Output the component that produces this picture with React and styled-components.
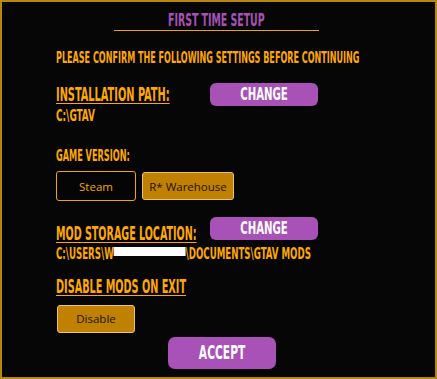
import React from 'react';
import styled, { createGlobalStyle } from 'styled-components';

const ORANGE = '#ffa800';
const PURPLE = '#a851b7';
const GOLD = '#c08000';

const Global = createGlobalStyle`
  html, body { margin: 0; padding: 0; background: #000; }
  #root { width: 437px; height: 379px; }
`;

const Frame = styled.div`
  box-sizing: border-box;
  width: 437px;
  height: 379px;
  border: 2px solid #b8860b;
  background: #060606;
  display: flex;
  flex-direction: column;
  overflow: hidden;
`;

const Header = styled.header`
  display: flex;
  flex-direction: column;
  align-items: center;
  padding: 8.7px 4px 0 0;
`;

const Caps = styled.span`
  display: inline-block;
  font-family: "Liberation Sans Narrow", "DejaVu Sans Condensed", "Liberation Sans", sans-serif;
  font-weight: 700;
  text-transform: uppercase;
  white-space: nowrap;
  font-size: ${p => p.$size}px;
  line-height: 1;
  color: ${p => p.$color || ORANGE};
  transform: scaleX(${p => p.$sx || 0.58});
  transform-origin: ${p => p.$origin || 'left'} center;
  text-decoration: ${p => (p.$underline ? 'underline' : 'none')};
  text-decoration-thickness: 1px;
  text-underline-offset: 2px;
  margin-top: ${p => p.$mt || 0}px;
`;

const Rule = styled.div`
  width: 205px;
  height: 1px;
  background: #f0a500;
  margin-top: 1.3px;
`;

const Body = styled.main`
  display: flex;
  flex-direction: column;
  align-items: flex-start;
  padding-left: 54px;
`;

const Row = styled.div`
  display: flex;
  align-items: ${p => p.$align || 'flex-start'};
  gap: ${p => p.$gap || 0}px;
  margin-top: ${p => p.$mt || 0}px;
`;

const LabelCell = styled.div`
  width: 154px;
  display: flex;
`;

const PillButton = styled.button`
  box-sizing: border-box;
  width: ${p => p.$w}px;
  height: ${p => p.$h}px;
  margin-top: ${p => p.$mt || 0}px;
  margin-left: ${p => p.$ml || 0}px;
  border: none;
  border-radius: ${p => p.$r || 6}px;
  background: ${PURPLE};
  padding: 0;
  display: flex;
  align-items: center;
  justify-content: center;
  cursor: pointer;
`;

const ToggleButton = styled.button`
  box-sizing: border-box;
  width: ${p => p.$w}px;
  height: ${p => p.$h}px;
  margin-top: ${p => p.$mt || 0}px;
  margin-left: ${p => p.$ml || 0}px;
  border-radius: 3px;
  border: 1px solid ${p => (p.$active ? '#e9c27a' : '#f0a500')};
  background: ${p => (p.$active ? GOLD : '#050505')};
  color: ${p => (p.$active ? '#1c1200' : '#f0a500')};
  font-family: "Open Sans", "Noto Sans", sans-serif;
  font-size: 11.5px;
  padding: 0;
  display: flex;
  align-items: center;
  justify-content: center;
  cursor: pointer;
`;

const Redact = styled.span`
  display: inline-block;
  width: ${p => p.$w}px;
  height: 9px;
  background: #fff;
  vertical-align: 3px;
`;

export default function App() {
  return (
    <>
      <Global />
      <Frame>
        <Header>
          <Caps $size={18} $color={PURPLE} $origin="center" $sx={0.58}>First Time Setup</Caps>
          <Rule />
        </Header>
        <Body>
          <Caps $size={16} $mt={18.6} $sx={0.56}>Please confirm the following settings before continuing</Caps>

          <Row $mt={17.4}>
            <LabelCell>
              <Caps $size={19} $underline $mt={2} $sx={0.574}>Installation Path:</Caps>
            </LabelCell>
            <PillButton $w={108} $h={23}>
              <Caps $size={18.5} $color="#fff" $origin="center" $sx={0.61}>Change</Caps>
            </PillButton>
          </Row>
          <Caps $size={15.5} $mt={3} $sx={0.64}>C:\GTAV</Caps>

          <Caps $size={15.5} $mt={24.5} $sx={0.586}>Game Version:</Caps>
          <Row $mt={7} $align="center" $gap={6}>
            <ToggleButton $w={80} $h={30}>Steam</ToggleButton>
            <ToggleButton $w={92} $h={28} $active>R* Warehouse</ToggleButton>
          </Row>

          <Row $mt={15.5}>
            <LabelCell>
              <Caps $size={19} $underline $mt={7} $sx={0.56}>Mod Storage Location:</Caps>
            </LabelCell>
            <PillButton $w={108} $h={23}>
              <Caps $size={18.5} $color="#fff" $origin="center" $sx={0.61}>Change</Caps>
            </PillButton>
          </Row>
          <Caps $size={15.5} $mt={4} $sx={0.62}>
            C:\Users\W<Redact $w={116} />\Documents\GTAV Mods
          </Caps>

          <Caps $size={19} $underline $mt={15} $sx={0.567}>Disable mods on exit</Caps>
          <ToggleButton $w={78} $h={28} $mt={8.5} $ml={1} $active>Disable</ToggleButton>
          <PillButton $w={108} $h={32} $r={7} $mt={4} $ml={112}>
            <Caps $size={19.5} $color="#fff" $origin="center" $sx={0.61}>Accept</Caps>
          </PillButton>
        </Body>
      </Frame>
    </>
  );
}
